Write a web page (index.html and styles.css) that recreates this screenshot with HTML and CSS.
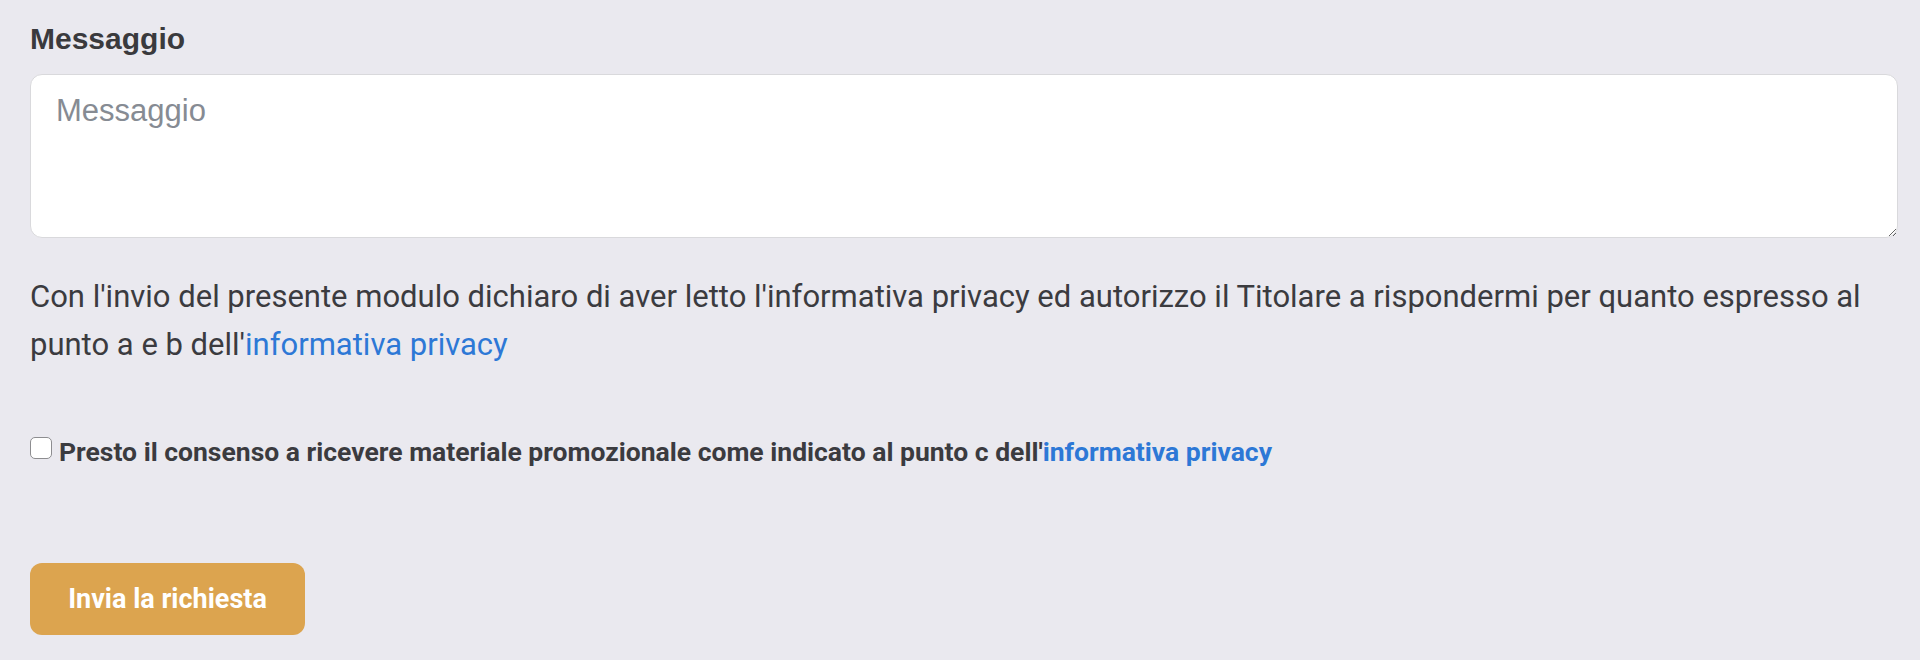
FILE: index.html
```html
<!DOCTYPE html>
<html lang="it">
<head>
<meta charset="utf-8">
<title>Messaggio</title>
<link rel="stylesheet" href="styles.css">
</head>
<body>
<form class="form">
  <label class="field-label" for="msg">Messaggio</label>
  <textarea id="msg" class="field-textarea" placeholder="Messaggio"></textarea>
  <p class="privacy">Con l'invio del presente modulo dichiaro di aver letto l'informativa privacy ed autorizzo il Titolare a rispondermi per quanto espresso al punto a e b dell'<a href="#" class="link">informativa privacy</a></p>
  <label class="consent">
    <input type="checkbox" class="consent-box">
    <span class="consent-text">Presto il consenso a ricevere materiale promozionale come indicato al punto c dell'<a href="#" class="link">informativa privacy</a></span>
  </label>
  <div class="actions">
    <button type="button" class="submit">Invia la richiesta</button>
  </div>
</form>
</body>
</html>
```

FILE: styles.css
```css
html, body {
  margin: 0;
  padding: 0;
  background: #eae9ef;
}
body {
  font-family: Roboto, "Liberation Sans", Arial, sans-serif;
  color: #3b3b3f;
}
.form {
  display: flex;
  flex-direction: column;
  align-items: flex-start;
  padding: 22px 22px 0 30px;
}
.field-label {
  font-family: "Liberation Sans", Arial, sans-serif;
  font-weight: 700;
  font-size: 30px;
  line-height: 34px;
  color: #3a3a3d;
}
.field-textarea {
  box-sizing: border-box;
  margin-top: 18px;
  width: 100%;
  height: 164px;
  border: 1px solid #d9d9dc;
  border-radius: 12px;
  background: #fff;
  padding: 13px 25px;
  font-family: "Liberation Sans", Arial, sans-serif;
  font-size: 31px;
  line-height: 45px;
  color: #333;
  resize: vertical;
  outline: none;
}
.field-textarea::placeholder {
  color: #868b93;
}
.privacy {
  margin: 35px 0 0;
  font-size: 31px;
  line-height: 48px;
  color: #3b3b3f;
}
.link {
  color: #2d78d6;
  text-decoration: none;
}
.consent {
  display: flex;
  align-items: flex-start;
  gap: 7px;
  margin-top: 67px;
  font-size: 26.5px;
  line-height: 32px;
  font-weight: 700;
  color: #3b3b3f;
}
.consent-box {
  appearance: none;
  -webkit-appearance: none;
  box-sizing: border-box;
  flex: none;
  width: 22px;
  height: 22px;
  margin: 1px 0 0;
  border: 1.5px solid #8d8d90;
  border-radius: 5px;
  background: #fff;
}
.actions {
  margin-top: 95px;
}
.submit {
  box-sizing: border-box;
  width: 275px;
  height: 72px;
  border: none;
  border-radius: 12px;
  background: #dca44f;
  color: #fff;
  font-family: Roboto, "Liberation Sans", Arial, sans-serif;
  font-size: 27px;
  font-weight: 700;
  padding: 0;
  cursor: pointer;
}
```
